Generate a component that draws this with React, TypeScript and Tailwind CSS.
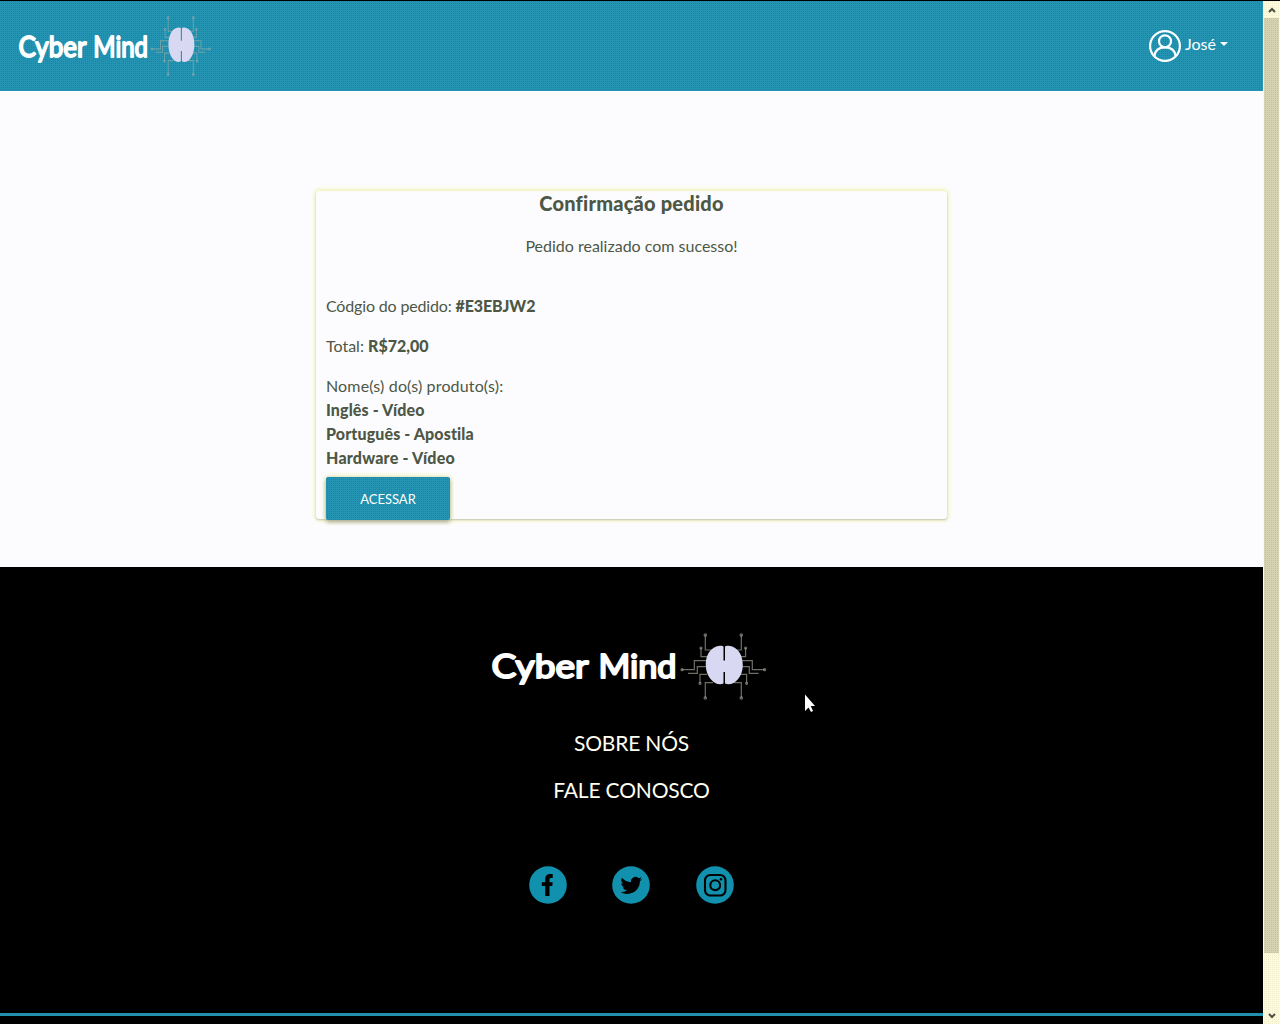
import React from "react";

function Logo({ className }: { className: string }) {
  const side = (
    <g fill="none" strokeWidth="1.2">
      <path d="M217.300 3V18H224M213 16V24.700H219M194 37.700H206.300V28.700H219M200 41.300H209.300V34.700H219M212 51.300V42.300H219M217.300 66V50.700H225" />
      <circle cx="217.300" cy="3" r="1.200" />
      <circle cx="213" cy="16" r="1" />
      <circle cx="194" cy="37.700" r="1" />
      <circle cx="212" cy="51.300" r="1" />
      <circle cx="217.300" cy="66" r="1.200" />
    </g>
  );
  return (
    <svg viewBox="0 0 280 70" preserveAspectRatio="none" className={className} role="img" aria-label="Cyber Mind">
      <g
        className="fill-white stroke-white font-['Lato',sans-serif] text-[32.500px] font-normal"
        strokeWidth="2"
        strokeLinejoin="round"
      >
        <text x="3.500" y="46.300" textLength="97" lengthAdjust="spacingAndGlyphs">Cyber</text>
        <text x="110.500" y="46.300" textLength="78" lengthAdjust="spacingAndGlyphs">Mind</text>
      </g>
      <g className="stroke-[#a9aca0]/65">
        {side}
        <g transform="translate(470.600 0) scale(-1 1)">{side}</g>
      </g>
      <path
        className="fill-[#d8d8f2]"
        d="M235.500 14.500C233 12.500 218 14 217.800 33C217.800 47 229 55 235.500 51.500V40H237V51.500C244 55 254.800 47 254.800 33C254.600 14 239.500 12.500 237 14.500V28.500H235.500Z"
      />
    </svg>
  );
}

function UserIcon() {
  return (
    <svg viewBox="0 0 32 32" className="h-8 w-8 fill-none stroke-white" strokeWidth="2.200">
      <circle cx="16" cy="16" r="14.900" />
      <circle cx="16" cy="11.300" r="6" />
      <path d="M5.500 26C6 20 10 17.300 16 17.300S26 20 26.500 26" />
    </svg>
  );
}

function Facebook() {
  return (
    <svg viewBox="0 0 38 38" className="size-[38px]">
      <circle cx="19" cy="19" r="18.800" className="fill-[#1191ad]" />
      <path d="M16.200 30V20H12.800V16.200H16.200V13.300C16.200 9.800 18.300 8 21.300 8H23.700V12H22C20.800 12 20.500 12.600 20.500 13.600V16.200H23.700L23.300 20H20.500V30Z" />
    </svg>
  );
}

function Twitter() {
  return (
    <svg viewBox="0 0 38 38" className="size-[38px]">
      <circle cx="19" cy="19" r="18.800" className="fill-[#1191ad]" />
      <path
        transform="translate(8.500 9) scale(.9 .87)"
        d="M23.950 4.570a10 10 0 0 1-2.820.77 4.960 4.960 0 0 0 2.160-2.720c-.95.550-2 .95-3.130 1.180a4.920 4.920 0 0 0-8.380 4.480C7.690 8.090 4.070 6.130 1.640 3.160a4.920 4.920 0 0 0 1.520 6.570 4.900 4.900 0 0 1-2.230-.61v.06a4.920 4.920 0 0 0 3.950 4.830 5 5 0 0 1-2.210.08 4.940 4.940 0 0 0 4.600 3.420A9.870 9.870 0 0 1 0 19.540a14 14 0 0 0 7.550 2.210c9.050 0 14-7.500 14-13.980l-.02-.64a9.940 9.940 0 0 0 2.420-2.560z"
      />
    </svg>
  );
}

function Instagram() {
  return (
    <svg viewBox="0 0 38 38" className="size-[38px]">
      <circle cx="19" cy="19" r="18.800" className="fill-[#1191ad]" />
      <g fill="none" className="stroke-black" strokeWidth="2.100">
        <rect x="9" y="9" width="20.500" height="20.500" rx="5.500" />
        <circle cx="19.200" cy="19.200" r="4.900" />
      </g>
      <circle cx="25" cy="13.300" r="1.300" />
    </svg>
  );
}

export default function App() {
  return (
    <div className="flex h-[1024px] w-[1280px] overflow-hidden bg-[#fcfcff] font-['Lato',sans-serif] text-base text-[#4d5745]">
      <div className="relative flex w-[1263px] flex-col">
        <header className="flex h-[91px] shrink-0 items-start justify-between border-t border-black bg-[#2494b2] bg-[conic-gradient(from_0deg,#1b83a8_25%,transparent_0)] bg-[size:2px_2px] pl-4 pr-[35px]">
          <Logo className="mt-3.5 h-[63px] w-[196px]" />
          <button className="mt-[29px] flex items-center text-white">
            <UserIcon />
            <span className="-mt-1 ml-1">José</span>
            <span className="-mt-1 ml-1 border-x-4 border-t-4 border-x-transparent border-t-white" />
          </button>
        </header>

        <main className="flex h-[476px] shrink-0 justify-center pt-[100px]">
          <section className="h-[328px] w-[631px] rounded-[3px] shadow-[0_1px_2px_#c4c4b8,0_0_5px_1px_#f0f0a0]">
            <h1 className="text-center text-xl font-black leading-6 tracking-[0.01em]">Confirmação pedido</h1>
            <p className="mt-[19px] text-center">Pedido realizado com sucesso!</p>
            <div className="mt-9 px-2.5">
              <p><span className="tracking-[-0.16px]">Códgio do pedido: </span><b className="font-black tracking-[-0.1px]">#E3EBJW2</b></p>
              <p className="mt-4">Total: <b className="font-black">R$72,00</b></p>
              <p className="mt-4 tracking-[0.15px]">Nome(s) do(s) produto(s):</p>
              <ul className="font-black tracking-[0.12px]">
                <li>Inglês - Vídeo</li>
                <li>Português - Apostila</li>
                <li className="tracking-[0.2px]">Hardware - Vídeo</li>
              </ul>
              <button className="mt-[7px] h-[43px] w-[124px] rounded-[2px] bg-[#2494b2] bg-[conic-gradient(from_0deg,#1b83a8_25%,transparent_0)] bg-[size:2px_2px] pt-0.5 text-[13px] text-white shadow-[0_2px_4px_#a8a89c,0_0_6px_#ecec9c]">ACESSAR</button>
            </div>
          </section>
        </main>

        <footer className="flex flex-1 flex-col items-center bg-black text-white">
          <Logo className="-ml-[7px] mt-[65px] h-[70px] w-[280px]" />
          <nav className="mt-[25px] flex flex-col items-center gap-[15px] text-[21px] leading-8 tracking-[-0.18px] text-[#fffff0]">
            <a>SOBRE NÓS</a>
            <a>FALE CONOSCO</a>
          </nav>
          <div className="mt-[60px] flex">
            <Facebook />
            <div className="ml-[45px] mr-[46px]"><Twitter /></div>
            <Instagram />
          </div>
          <div className="mb-2 mt-auto h-[3px] w-full bg-[#2191ae]" />
        </footer>
        <svg viewBox="0 0 12 20" className="absolute left-[804px] top-[693px] h-5 w-3 fill-white">
          <path d="M1 1.500V18L4.500 14.500L7 19L9 18L6.800 13H11Z" />
        </svg>
      </div>
      <aside className="flex w-[17px] flex-col justify-between border-t border-black bg-[#fcfbe0] bg-[conic-gradient(from_0deg,#f0eecb_25%,transparent_0)] bg-[size:2px_2px]">
        <div className="flex h-[17px] shrink-0 items-center justify-center">
          <svg viewBox="0 0 8 6" className="h-1.5 w-2 fill-none stroke-[#4d5040]" strokeWidth="2"><path d="M1 5L4 2L7 5" /></svg>
        </div>
        <div className="mx-px h-[935px] shrink-0 bg-[#d4d2b0] bg-[conic-gradient(from_0deg,#c3c1ac_25%,transparent_0)] bg-[size:2px_2px]" />
        <div className="mt-auto flex h-[17px] items-center justify-center">
          <svg viewBox="0 0 8 6" className="h-1.5 w-2 fill-none stroke-[#4d5040]" strokeWidth="2"><path d="M1 1L4 4L7 1" /></svg>
        </div>
      </aside>
    </div>
  );
}
